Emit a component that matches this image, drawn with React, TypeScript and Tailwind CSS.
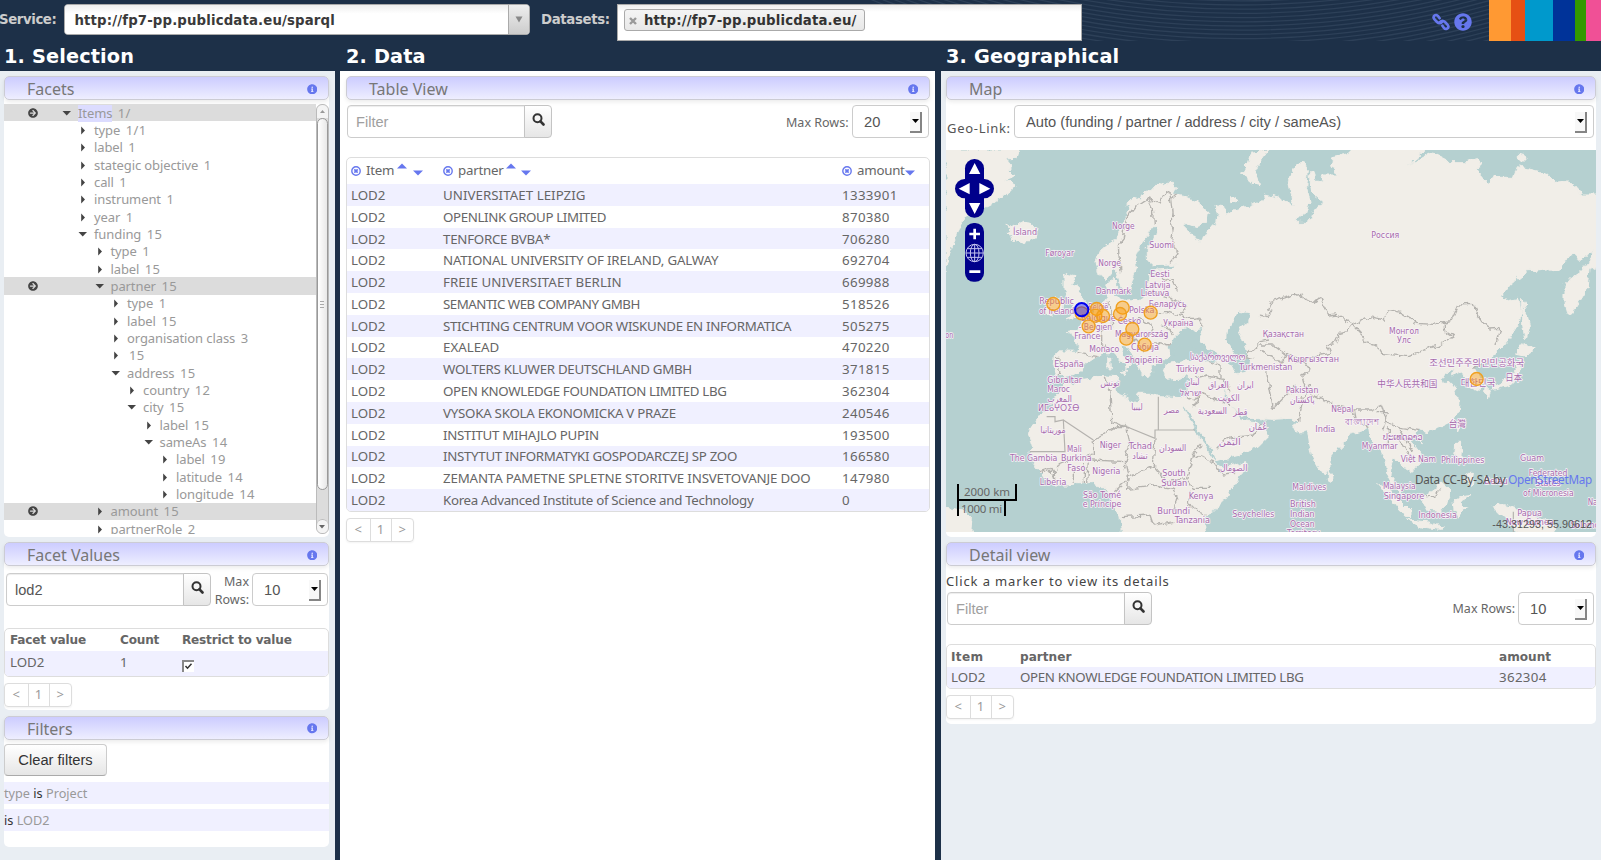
import React from "react";
import { FaArrowCircleRight, FaInfoCircle, FaQuestionCircle } from "react-icons/fa";

const UI = "font-['Noto_Sans','DejaVu_Sans',sans-serif]";
const BOLD = "font-['DejaVu_Sans',sans-serif] font-bold";
const FORM = "font-['Liberation_Sans',Arial,sans-serif]";

function TopBar() {
  return (
    <header className="relative flex h-[41px] bg-[#1d3048]">
      <svg className="absolute left-[800px] top-0" width="689" height="41">
        {Array.from({ length: 42 }, (_, i) => (
          <circle key={i} cx="440" cy="-900" r={800 + i * 4.2} fill="none" stroke="#2d4058" strokeWidth="1.3" />
        ))}
      </svg>
      <div className={"relative flex flex-1 items-start text-[13.3px] " + BOLD}>
        <span className="-ml-px mt-[10px] w-[65px] tracking-[-0.4px] leading-[20px] text-[#ccc]">Service:</span>
        <div className="mt-[4px] flex h-[31px] w-[466px] overflow-hidden rounded border border-[#aaa] bg-white">
          <span className="flex-1 bg-gradient-to-b from-[#eee] from-0% to-white to-30% pl-[9.500px] pt-[6px] leading-[20px] tracking-[0.14px] text-[#3a3a3a]">
            http://fp7-pp.publicdata.eu/sparql
          </span>
          <span className="flex w-[21px] items-center justify-center border-l border-[#aaa] bg-gradient-to-b from-[#eee] to-[#ccc]">
            <svg width="8" height="7"><path d="M0.5 0.5h7L4 6.5z" fill="#888" /></svg>
          </span>
        </div>
        <span className="ml-[11px] mt-[10px] w-[76px] tracking-[-0.35px] leading-[20px] text-[#ccc]">Datasets:</span>
        <div className="mt-[4px] h-[37px] w-[465px] border border-[#aaa] bg-white bg-gradient-to-b from-[#eee] from-0% to-white to-20% p-[4px_6px]">
          <span className="inline-flex h-[22px] items-center gap-[7px] rounded-[3px] border border-[#aaa] bg-gradient-to-b from-[#f4f4f4] to-[#e8e8e8] pl-[4px] pr-[7px] pt-px leading-[20px] tracking-[0.14px] text-[#333]">
            <svg width="8" height="8"><path d="M1 1l6 6M7 1l-6 6" stroke="#999" strokeWidth="2.4" /></svg>
            http://fp7-pp.publicdata.eu/
          </span>
        </div>
      </div>
      <div className="relative mr-[17px] flex items-start gap-[4px] pt-[13px] text-[#6677ee]">
        <svg width="18" height="18" viewBox="0 0 18 18" fill="none" stroke="currentColor" strokeWidth="2.7" strokeLinecap="round">
          <path d="M7.600 5.200 6 3C4.500 1 1.200 2.400 1.600 4.800c0.200 1.200 1.200 2 3.400 4.200 1.700 1.700 3.600 1.500 4.800 0.100" />
          <path d="M10.400 12.800l1.600 2.200c1.500 2 4.800 0.600 4.400-1.800-0.200-1.200-1.200-2-3.400-4.200-1.700-1.700-3.600-1.500-4.800-0.100" />
        </svg>
        <FaQuestionCircle size={18} />
      </div>
      <div className="relative flex w-[112px]">
        <i className="w-[21.500px] bg-[#ff9933]" />
        <i className="w-[14.200px] bg-[#e65014]" />
        <i className="w-[28.300px] bg-[#0099cc]" />
        <i className="w-[22px] bg-[#003399]" />
        <i className="w-[11px] bg-[#339900]" />
        <i className="flex-1 bg-[#f05096]" />
      </div>
    </header>
  );
}

function PanelTitle({ children }: { children: string }) {
  return (
    <div className="flex h-[24px] items-center rounded-[5px] border border-[#ccccd4] bg-gradient-to-b from-[#ccccff] to-[#eeeeff] pl-[22px] pr-[11px] shadow-[0_2px_4px_rgba(0,0,0,0.08)]">
      <span className="flex-1 pt-[2px] text-[16px] leading-[22px] text-[#777]">{children}</span>
      <FaInfoCircle size={10.500} className="mt-[2px] text-[#6677ee]" />
    </div>
  );
}

function Search({ placeholder, value }: { placeholder?: string; value?: string }) {
  return (
    <div className="flex h-[33px] w-[205px]">
      <input
        className={"h-[32.500px] w-[178px] rounded-l-[4px] border border-[#ccc] bg-white pl-[8px] pt-px text-[14.600px] text-[#555] shadow-[inset_0_1px_1px_rgba(0,0,0,0.075)] placeholder:text-[#a0a0a0] " + FORM}
        placeholder={placeholder}
        defaultValue={value}
      />
      <button className="-ml-px flex h-[33px] w-[28px] items-center justify-center rounded-r-[4px] border border-[#c4c4c4] bg-gradient-to-b from-white to-[#e6e6e6] pb-[4px]">
        <svg width="13" height="13" viewBox="0 0 13 13" fill="none" stroke="#333">
          <circle cx="5.500" cy="5.200" r="4" strokeWidth="2" />
          <path d="M8.500 8.300l3 3.200" strokeWidth="2.600" strokeLinecap="round" />
        </svg>
      </button>
    </div>
  );
}

function Select({ children, className }: { children: string; className: string }) {
  return (
    <div className={"flex h-[33px] items-center rounded-[4px] border border-[#ccc] bg-white pl-[11px] pr-[6px] text-[14.700px] text-[#555] " + FORM + " " + className}>
      <span className="flex-1 pt-px">{children}</span>
      <span className="mt-px flex h-[21px] w-[12px] items-center justify-center border-b-2 border-r-2 border-[#858585] bg-[#f8f8f8]">
        <svg width="7" height="4"><path d="M0 0h7L3.500 4z" fill="#000" /></svg>
      </span>
    </div>
  );
}

function Pager() {
  return (
    <div className="flex h-[24px] w-[68px] rounded-[4px] border border-[#ddd] text-center text-[13px] leading-[21px] text-[#999] shadow-[0_1px_2px_rgba(0,0,0,0.05)]">
      <span className="w-[23.500px] border-r border-[#ddd]">&lt;</span>
      <span className="w-[21px] border-r border-[#ddd]">1</span>
      <span className="flex-1">&gt;</span>
    </div>
  );
}

type Node = { t: string; n: string; d: number; open?: boolean; on?: boolean };
const tree: Node[] = [
  { t: "Items", n: "1/", d: 0, open: true, on: true },
  { t: "type", n: "1/1", d: 1 },
  { t: "label", n: "1", d: 1 },
  { t: "stategic objective", n: "1", d: 1 },
  { t: "call", n: "1", d: 1 },
  { t: "instrument", n: "1", d: 1 },
  { t: "year", n: "1", d: 1 },
  { t: "funding", n: "15", d: 1, open: true },
  { t: "type", n: "1", d: 2 },
  { t: "label", n: "15", d: 2 },
  { t: "partner", n: "15", d: 2, open: true, on: true },
  { t: "type", n: "1", d: 3 },
  { t: "label", n: "15", d: 3 },
  { t: "organisation class", n: "3", d: 3 },
  { t: "", n: "15", d: 3 },
  { t: "address", n: "15", d: 3, open: true },
  { t: "country", n: "12", d: 4 },
  { t: "city", n: "15", d: 4, open: true },
  { t: "label", n: "15", d: 5 },
  { t: "sameAs", n: "14", d: 5, open: true },
  { t: "label", n: "19", d: 6 },
  { t: "latitude", n: "14", d: 6 },
  { t: "longitude", n: "14", d: 6 },
  { t: "amount", n: "15", d: 2, on: true },
  { t: "partnerRole", n: "2", d: 2 },
];
const indent = ["pl-[30px]", "pl-[46px]", "pl-[62.500px]", "pl-[79px]", "pl-[95px]", "pl-[111.500px]", "pl-[128px]"];

function FacetTree() {
  return (
    <div className="mt-[4px] flex h-[430px] overflow-hidden">
      <div className="flex-1">
        {tree.map((r, i) => (
          <div key={i} className={"flex h-[17.330px] items-center text-[13px] leading-[17px] text-[#999] " + (r.on ? "bg-[#dcdcdc]" : "")}>
            <span className="flex w-[23px] shrink-0 justify-end text-[#444]">
              {r.on && <FaArrowCircleRight size={10} className="mr-[-11px]" />}
            </span>
            <span className={"ml-[5px] flex items-center pt-px " + indent[r.d]}>
              <span className="flex w-[16px] shrink-0">
                {r.open ? (
                  <svg width="9" height="5"><path d="M0.500 0H9L4.700 4.500z" fill="#444" /></svg>
                ) : (
                  <svg width="9" height="9"><path d="M3.200 0.500v8L7 4.500z" fill="#444" /></svg>
                )}
              </span>
              <span className={"tracking-[-0.1px] " + (r.d === 0 ? "bg-[#dcdcff]" : "")}>{r.t}</span>
              <span className={"tracking-[0.3px] " + (r.t ? "ml-[5.500px]" : "ml-[2px]")}>{r.n}</span>
            </span>
          </div>
        ))}
      </div>
      <div className="flex w-[13.500px] flex-col rounded-[6px] border border-[#bbb] bg-[#dcdcdc]">
        <span className="flex h-[13px] shrink-0 items-center justify-center rounded-t-[6px] bg-[#f4f4f4]">
          <svg width="5" height="3"><path d="M0 3h5L2.500 0z" fill="#999" /></svg>
        </span>
        <span className="flex h-[372px] shrink-0 flex-col items-center justify-center gap-[2px] rounded-[6px] border border-[#999] bg-gradient-to-r from-white to-[#e8e8e8]">
          <i className="h-px w-[4px] bg-[#aaa]" />
          <i className="h-px w-[4px] bg-[#aaa]" />
          <i className="h-px w-[4px] bg-[#aaa]" />
        </span>
        <span className="mt-auto flex h-[14px] items-center justify-center rounded-[6px] border-t border-[#bbb] bg-[#f4f4f4]">
          <svg width="6" height="4"><path d="M0 0h6L3 3.500z" fill="#666" /></svg>
        </span>
      </div>
    </div>
  );
}

function Selection() {
  return (
    <section className="flex w-[335px] flex-col gap-[5.500px] bg-[#e9eef3] pl-[4px] pr-[6px] pt-[5px]">
      <div className="h-[460.500px] rounded-[5px] bg-white">
        <PanelTitle>Facets</PanelTitle>
        <FacetTree />
      </div>
      <div className="h-[168px] rounded-[5px] bg-white">
        <PanelTitle>Facet Values</PanelTitle>
        <div className="flex pl-[2px] pr-[1px] pt-[7px]">
          <Search value="lod2" />
          <span className="w-[39px] pr-px text-right text-[12.500px] leading-[18px] text-[#666]">Max Rows:</span>
          <Select className="ml-[2px] w-[76px]">10</Select>
        </div>
        <div className="mt-[-16px] pt-[35px]">
          <div className="h-[49px] overflow-hidden rounded-[5px] border border-[#ddd] text-[#666]">
            <div className={"flex h-[22px] items-center pl-[5px] text-[12.100px] tracking-[-0.2px] " + BOLD}>
              <span className="w-[110px]">Facet value</span>
              <span className="w-[62px]">Count</span>
              <span className="whitespace-nowrap">Restrict to value</span>
            </div>
            <div className="flex h-[25px] bg-[#f0f0ff] pl-[5px] text-[13.300px] leading-[22px]">
              <span className="w-[110px]">LOD2</span>
              <span className="w-[62px]">1</span>
              <span className="mt-[9px] h-[12px] w-[12px] border-l-2 border-t-2 border-[#888] bg-white">
                <svg width="10" height="10"><path d="M1.500 4l2 2.200L7.500 1.800" fill="none" stroke="#333" strokeWidth="1.500" /></svg>
              </span>
            </div>
          </div>
        </div>
        <div className="pt-[6px]"><Pager /></div>
      </div>
      <div className="h-[131px] rounded-[5px] bg-white">
        <PanelTitle>Filters</PanelTitle>
        <button className={"mt-[4px] flex h-[32px] w-[103px] items-center justify-center rounded-[4px] border border-[#ccc] border-b-[#aaa] bg-gradient-to-b from-white to-[#e6e6e6] pt-px text-[14.700px] text-[#333] " + FORM}>
          Clear filters
        </button>
        <p className="mt-[6px] h-[22px] bg-[#f0f0ff] text-[12.700px] leading-[23px] text-[#999]">type <span className="text-[#333]">is</span> Project</p>
        <p className="mt-[5px] h-[22px] bg-[#f0f0ff] text-[12.700px] leading-[23px] text-[#999]"><span className="text-[#333]">is</span> LOD2</p>
      </div>
    </section>
  );
}

const rows: [string, string, string][] = [
  ["UNIVERSITAET LEIPZIG", "1333901", "tracking-[0.05px]"],
  ["OPENLINK GROUP LIMITED", "870380", "tracking-[-0.37px]"],
  ["TENFORCE BVBA*", "706280", "tracking-[-0.25px]"],
  ["NATIONAL UNIVERSITY OF IRELAND, GALWAY", "692704", "tracking-[-0.17px]"],
  ["FREIE UNIVERSITAET BERLIN", "669988", "tracking-[0.08px]"],
  ["SEMANTIC WEB COMPANY GMBH", "518526", "tracking-[-0.48px]"],
  ["STICHTING CENTRUM VOOR WISKUNDE EN INFORMATICA", "505275", "tracking-[-0.3px]"],
  ["EXALEAD", "470220", "tracking-[0px]"],
  ["WOLTERS KLUWER DEUTSCHLAND GMBH", "371815", "tracking-[-0.3px]"],
  ["OPEN KNOWLEDGE FOUNDATION LIMITED LBG", "362304", "tracking-[-0.34px]"],
  ["VYSOKA SKOLA EKONOMICKA V PRAZE", "240546", "tracking-[-0.25px]"],
  ["INSTITUT MIHAJLO PUPIN", "193500", "tracking-[-0.28px]"],
  ["INSTYTUT INFORMATYKI GOSPODARCZEJ SP ZOO", "166580", "tracking-[-0.3px]"],
  ["ZEMANTA PAMETNE SPLETNE STORITVE INSVETOVANJE DOO", "147980", "tracking-[-0.16px]"],
  ["Korea Advanced Institute of Science and Technology", "0", "tracking-[-0.3px]"],
];

function Remove() {
  return (
    <svg width="10" height="10" viewBox="0 0 10 10" className="mr-[5px]" fill="none" stroke="#6677ee">
      <circle cx="5" cy="5" r="4.200" strokeWidth="1.400" />
      <path d="M3.300 3.300l3.400 3.400M6.700 3.300L3.300 6.700" strokeWidth="1.700" />
    </svg>
  );
}
function Up() {
  return <svg width="10" height="6" className="mb-[10px] ml-[3px]"><path d="M0 5.500h10L5 0.500z" fill="#6677ee" /></svg>;
}
function Down({ className }: { className: string }) {
  return <svg width="10" height="6" className={"mt-[4px] " + className}><path d="M0 0.500h10L5 5.500z" fill="#6677ee" /></svg>;
}

function Data() {
  return (
    <section className="ml-[5px] w-[595px] bg-white pl-[6px] pr-[5px] pt-[5px]">
      <PanelTitle>Table View</PanelTitle>
      <div className="flex items-center pl-px pr-[1px] pt-[5px]">
        <Search placeholder="Filter" />
        <span className="ml-auto pt-[3px] text-[12.500px] text-[#666]">Max Rows:</span>
        <Select className="ml-[3.500px] w-[77px]">20</Select>
      </div>
      <div className="mt-[19px] overflow-hidden rounded-[5px] border border-[#ddd] text-[13.300px] text-[#666]">
        <div className="flex h-[26px] items-center pl-[4px] tracking-[-0.25px]">
          <div className="flex w-[92px] items-center"><Remove />Item<Up /><Down className="ml-[6px]" /></div>
          <div className="flex w-[399px] items-center"><Remove />partner<Up /><Down className="ml-[5px]" /></div>
          <div className="flex items-center"><Remove />amount<Down className="ml-0" /></div>
        </div>
        {rows.map(([p, a, spacing], i) => (
          <div key={p} className={"flex h-[21.800px] items-center whitespace-nowrap pl-[4px] pt-px leading-[21px] " + (i % 2 ? "bg-white" : "bg-[#f0f0ff]")}>
            <span className="w-[92px]">LOD2</span>
            <span className={"w-[399px] " + spacing}>{p}</span>
            <span className="tracking-[0.35px]">{a}</span>
          </div>
        ))}
      </div>
      <div className="pt-[6px]"><Pager /></div>
    </section>
  );
}

const land = [
  "M18 15H235L228 40 200 42 215 60 205 80 225 95 195 105 222 120 215 135 180 160 150 180 110 200 75 220 55 250 45 285 30 320 18 380Z",
  "M198 234L215 245 225 238 240 240 250 232 275 235 292 255 285 275 250 297 225 290 210 280 222 270 200 262 215 255Z",
  "M985 15L935 22 925 55 908 85 920 100 945 122 958 125 955 100 945 80 960 50Z",
  "M372 395L385 388 405 392 392 415 415 430 420 455 432 470 455 490 450 510 400 518 380 524 405 502 392 492 402 475 385 455 372 430Z",
  "M325 470L350 455 368 470 365 500 335 512 315 500Z",
  "M475 385L468 350 478 320 500 300 530 285 545 250 560 215 575 180 555 185 580 160 600 165 605 145 630 140 650 118 665 120 685 112 700 112 710 130 700 150 740 155 775 170 805 205 800 235 770 245 740 235 728 240 750 262 765 285 785 290 790 272 800 270 812 245 830 232 835 205 828 180 855 182 852 215 885 195 935 180 960 172 975 150 1020 160 1062 185 1045 110 1065 60 1095 52 1105 75 1100 125 1110 170 1100 205 1066 222 1075 232 1100 232 1112 222 1118 195 1145 180 1152 205 1140 178 1150 170 1115 140 1108 90 1120 78 1130 105 1152 112 1140 90 1195 90 1175 60 1178 35 1230 25V5H1450V20L1400 65 1440 40 1465 25 1490 30 1530 50 1580 50 1610 38 1625 60 1605 70 1630 100 1648 120 1660 90 1680 100 1720 100 1732 65 1780 75 1820 85 1845 112 1880 108 1910 125 1922 150H1990V360L1950 370 1945 430 1930 450 1905 490 1885 510 1875 470 1875 420 1890 400 1920 380 1945 350 1960 318 1945 320 1920 350 1910 330 1885 335 1860 370 1840 380 1820 372 1760 378 1740 395 1710 420 1688 450 1700 468 1735 460 1742 475 1745 500 1735 540 1710 580 1690 605 1675 620 1645 645 1600 665 1615 690 1630 725 1615 738 1592 728 1582 700 1560 680 1535 690 1540 670 1505 700 1510 715 1535 715 1550 735 1540 750 1560 765 1558 800 1535 830 1500 847 1460 860 1440 855 1430 870 1445 895 1415 867 1405 875 1410 890 1440 925 1442 955 1415 980 1390 965 1380 950 1360 940 1355 955 1350 990 1370 1015 1390 1045 1400 1055 1380 1045 1355 1015 1340 985 1335 945 1325 915 1305 905 1290 875 1285 845 1265 860 1235 865 1220 885 1195 910 1170 930 1170 965 1150 990 1130 960 1115 930 1105 895 1100 860 1080 865 1060 845 1075 835 1050 820 1000 823 930 820 918 805 905 812 870 775 860 745 845 730 860 765 885 795 900 825 920 828 945 830 985 850 980 875 950 905 900 930 830 947 820 920 800 895 780 865 760 825 735 785 728 780 740 810 760 845 780 885 800 910 815 930 830 955 850 968 920 950 920 970 890 1010 850 1065 810 1105 790 1130 795 1175H545L540 1115 520 1085 515 1055 500 1025 470 1025 460 1010 410 1010 390 1020 350 1020 320 1005 300 980 280 955 270 925 275 905 265 865 285 835 300 810 340 780 345 755 370 725 380 715 410 715 430 703 500 693 530 695 522 735 545 750 590 770 600 745 640 745 660 755 725 758 745 745 752 700 740 690 700 705 680 690 670 670 690 655 720 650 760 635 800 650 850 645 840 625 800 605 780 590 795 550 760 555 735 545 720 560 700 580 685 605 690 630 660 655 630 665 640 680 625 697 605 685 590 645 560 605 540 600 545 625 575 655 560 670 530 635 515 610 490 625 470 635 440 655 420 680 380 697 350 690 340 655 345 620 410 622 415 600 410 575 385 565 415 548 430 530 455 512 470 490 500 465 510 440 500 420 520 400 530 410 530 432 520 450 560 465 610 462 622 430 632 390 650 375 690 372 715 355 690 360 640 362 622 345 622 310 650 270 655 245 630 245 625 270 600 300 585 340 590 370 580 400 570 430 550 440 535 405 525 370 500 400Z",
  "M5 1085L70 1095 98 1125 95 1175H5Z",
  "M1313 1013L1340 1028 1380 1065 1410 1095 1410 1120 1385 1105 1355 1065Z",
  "M1398 1125L1460 1130 1510 1145 1500 1153 1440 1145Z",
  "M1442 1060L1480 1035 1505 1012 1530 1035 1520 1075 1500 1100 1460 1095Z",
  "M1542 1065L1560 1055 1590 1052 1560 1068 1580 1090 1565 1092 1560 1120 1545 1100Z",
  "M1547 892L1562 892 1560 930 1575 945 1560 945 1545 925Z",
  "M1580 985L1600 985 1597 1025 1572 1010 1585 1000Z",
  "M1660 1085L1700 1082 1740 1095 1790 1115 1840 1145 1850 1175H1740L1700 1125Z",
  "M1552 825L1560 828 1550 855 1543 845Z",
  "M1165 975L1185 995 1175 1010 1165 1005Z",
  "M1742 640L1738 690 1720 715 1690 725 1655 735 1665 720 1700 705 1725 670Z",
  "M1745 593L1780 615 1755 630 1730 625Z",
  "M1638 730L1652 738 1645 760 1636 750Z",
  "M1748 460L1758 500 1768 540 1755 585 1748 540Z",
  "M503 640H512L514 668 504 672Z",
  "M500 610L510 605 512 628 503 630Z",
  "M540 678L563 672 556 690Z",
  "M705 700L730 693 720 708Z",
  "M1735 25L1755 30 1758 45 1735 45Z",
  "M870 160L885 155 888 172 872 176Z",
];
const water = [
  "M700 612L730 600 760 606 800 618 835 640 790 650 740 645 705 648Z",
  "M862 555L895 500 930 505 925 530 895 545 912 590 925 640 920 680 890 685 870 650 882 620 858 580Z",
];
const borders = [
  "M540 385L535 300 550 280 560 220 590 180 620 160 640 190 643 238",
  "M620 160L660 175 675 140 690 145 695 190 700 250 695 290 715 325 690 355",
  "M688 162L710 150M630 385L700 410 715 440M625 440L690 460 740 480 720 510M650 500L680 500 740 520 770 515 795 550M660 540L690 555 700 570M510 470L515 540 480 560M540 530L600 520 640 545 620 580",
  "M485 560V600L515 610M560 560L590 590 610 625M640 590L690 600M345 640H360L355 690M410 622L470 635",
  "M910 640L960 590 990 585M960 510L985 515 995 500 983 495 993 470 1060 450 1085 445 1090 460 1120 475 1138 458 1168 513 1190 510 1237 540 1285 515 1335 525 1345 497 1380 505 1430 535 1480 538 1535 525 1555 480 1600 478 1625 530 1650 552 1680 550 1665 600",
  "M1237 540L1220 560 1200 565 1190 595 1160 600 1170 625 1100 640 1065 650 1000 600 960 600M1237 540L1270 575 1275 590 1310 600 1325 625 1400 635 1455 612 1500 600 1540 575 1510 555 1510 530",
  "M960 620L990 630 1020 655 1040 625 1085 640 1110 675 1085 690 1095 730 1120 750 1165 775 1240 795 1290 795 1325 780 1340 830 1380 850 1440 860",
  "M1115 720L1090 760 1075 830M980 680L1000 790 1030 760 1070 720M1240 795L1245 820 1285 845M1310 800L1345 800 1330 850M1345 850L1345 905M1365 870L1390 900 1415 940M1375 850L1420 920M1600 670L1650 650",
  "M495 695L510 740 515 830 560 845M460 885L530 845 560 845M460 885V930L400 940 350 960 345 1000M560 845L570 900 555 950 460 945M555 950L565 1000 520 1040M645 880L640 960 565 1000M640 960L680 1010 740 1000 760 930 780 900M760 930L820 950 850 990 890 985M740 1000L760 1030 810 1030M565 1000L560 1030 640 1020 700 1030 710 1060 700 1100M545 1115L630 1110 640 1140 700 1130M750 1040L745 1080 800 1110M400 960V1010M430 960V1010M445 950L440 1010M300 980L330 970 350 1000",
  "M735 755L760 770 790 745 840 770 870 780M765 700L800 690 850 700 870 740M800 645L840 660 840 700M830 910L860 880 940 870 970 830M890 630L940 640M760 780L775 770V750",
  "M1505 1030L1480 1055 1455 1055",
];
const straightBorders = "M560 845L645 880V855H765M655 855V755M370 825L460 885M320 815H345V830L370 825 375 920H270M1720 1100V1161";
type Label = [string, number, number, number];
const labels: Label[] = [
  ["Ísland", 255, 271, 72], ["Føroyar", 359, 333, 86], ["Norge", 550, 252, 68], ["Norge", 509, 363, 68],
  ["Suomi", 665, 308, 74], ["Eesti", 660, 395, 58], ["Latvija", 653, 428, 76], ["Lietuva", 645, 453, 86],
  ["Danmark", 520, 448, 106], ["Беларусь", 683, 485, 114], ["Polska", 605, 503, 76], ["Česko", 568, 538, 70],
  ["Україна", 715, 543, 90], ["Republic", 350, 478, 104], ["of Ireland", 350, 506, 106], ["België", 475, 495, 60],
  ["Belgique", 475, 527, 104], ["- Belgien", 466, 556, 100], ["France", 442, 583, 78], ["Magyarország", 605, 575, 160],
  ["Monaco", 493, 621, 90], ["Србија", 615, 615, 84], ["Shqipëria", 611, 655, 114], ["España", 387, 667, 88],
  ["Türkiye", 750, 680, 84], ["საქართველო", 833, 645, 166], ["Gibraltar", 374, 714, 104], ["Maroc", 356, 740, 68],
  ["المغرب", 359, 770, 74], ["ⵍⵎⴰⵖⵔⵉⴱ", 356, 799, 124], ["تونس", 510, 722, 58], ["ليبيا", 591, 796, 34],
  ["مصر", 695, 805, 46], ["لبنان", 757, 720, 44], ["ישראל", 752, 752, 66], ["العراق", 835, 728, 62],
  ["ایران", 916, 730, 50], ["الكويت", 866, 769, 66], ["السعودية", 817, 807, 88], ["قطر", 901, 811, 42],
  ["عُمان", 954, 855, 56], ["اليَمَن", 869, 900, 66], ["الصومال", 881, 977, 82], ["موريتانيا", 339, 863, 76],
  ["Mali", 403, 920, 44], ["Niger", 511, 908, 64], ["Tchad", 601, 913, 70], ["تشاد", 600, 943, 46],
  ["السودان", 698, 917, 82], ["The Gambia", 281, 948, 142], ["Burkina", 409, 947, 92], ["Faso", 409, 977, 54],
  ["Nigeria", 499, 986, 84], ["South", 702, 992, 70], ["Sudan", 703, 1022, 78], ["Liberia", 339, 1021, 80],
  ["São Tomé", 486, 1058, 114], ["e Príncipe", 486, 1086, 116], ["Kenya", 783, 1062, 74], ["Burundi", 701, 1106, 98],
  ["Tanzania", 757, 1135, 106], ["Seychelles", 940, 1117, 126], ["Россия", 1336, 279, 84], ["Қазақстан", 1030, 575, 124],
  ["Монгол", 1392, 566, 90], ["Улс", 1392, 595, 42], ["Кыргызстан", 1120, 650, 154], ["Turkmenistan", 977, 675, 160],
  ["Pakistan", 1086, 744, 98], ["پاکستان", 1087, 775, 74], ["中华人民共和国", 1402, 727, 180],
  ["조선민주주의인민공화국", 1610, 664, 284], ["대한민국", 1614, 722, 104], ["日本", 1721, 709, 50], ["台灣", 1552, 845, 52],
  ["Nepal", 1207, 802, 66], ["বাংলাদেশ", 1266, 841, 100], ["India", 1156, 861, 60], ["ປະເທດລາວ", 1388, 884, 120],
  ["Myanmar", 1319, 913, 108], ["Việt Nam", 1435, 950, 106], ["Philippines", 1568, 955, 130], ["Guam", 1776, 947, 72],
  ["Maldives", 1108, 1035, 102], ["Malaysia", 1378, 1032, 98], ["Singapore", 1392, 1062, 122], ["Belau", 1668, 1018, 70],
  ["Federated", 1824, 992, 116], ["States", 1824, 1022, 76], ["of Micronesia", 1825, 1052, 152], ["British", 1089, 1087, 78],
  ["Indian", 1087, 1116, 74], ["Ocean", 1087, 1146, 74], ["Territory", 1090, 1174, 100], ["Indonesia", 1493, 1118, 116],
  ["Papua", 1769, 1112, 74], ["New Guinea", 1769, 1141, 144], ["Solomon", 1942, 1150, 100], ["Nauru", 1976, 1079, 66],
  ["on", 28, 580, 24],
];
const markers = [
  [340, 477], [425, 505], [470, 492], [466, 512], [489, 513], [446, 544], [548, 488], [540, 507],
  [632, 503], [577, 552], [559, 581], [614, 599], [1610, 702],
];

function WorldMap() {
  return (
    <div className="relative h-[382px] w-[650px] overflow-hidden bg-[#b5d0d0]">
      <svg width="650" height="382" viewBox="18 15 1950 1146" className="block">
        <filter id="coast" x="0" y="0" width="2000" height="1180" filterUnits="userSpaceOnUse">
          <feTurbulence type="fractalNoise" baseFrequency="0.045" numOctaves="3" seed="4" result="n" />
          <feDisplacementMap in="SourceGraphic" in2="n" scale="22" xChannelSelector="R" yChannelSelector="G" />
        </filter>
        <g filter="url(#coast)">
          <g fill="#f1eee8" stroke="#f1eee8" strokeWidth="3" strokeLinejoin="round">{land.map((d) => <path key={d} d={d} />)}</g>
          <g fill="#b5d0d0">{water.map((d) => <path key={d} d={d} />)}</g>
          <g fill="none" stroke="#b4b2ae" strokeWidth="4" strokeLinejoin="round">{borders.map((d) => <path key={d} d={d} />)}</g>
        </g>
        <path d={straightBorders} fill="none" stroke="#b4b2ae" strokeWidth="3.500" />
        <g fill="#a66bab" stroke="#f8f3f8" strokeWidth="5" strokeLinejoin="round" paintOrder="stroke" fontSize="27" textAnchor="middle" fontFamily="'DejaVu Sans','Noto Sans CJK SC','Noto Sans CJK KR',sans-serif">
          {labels.map(([t, x, y, w], i) => (
            <text key={i} x={x} y={y} textLength={w} lengthAdjust="spacingAndGlyphs">{t}</text>
          ))}
        </g>
        <g fill="#ff9900" fillOpacity="0.4" stroke="#f0a020" strokeWidth="4">
          {markers.map(([x, y]) => <circle key={x} cx={x} cy={y} r="19.500" />)}
        </g>
        <circle cx="425" cy="494" r="20" fill="#0000ff" fillOpacity="0.400" stroke="#0000ee" strokeWidth="6" />
        <g fill="#00008b">
          <rect x="75" y="42" width="57" height="176" rx="28" />
          <rect x="45" y="102" width="117" height="58" rx="29" />
          <rect x="75" y="234" width="57" height="176" rx="26" />
        </g>
        <g fill="#fff">
          <path d="M104 54L121 87H87ZM104 207L121 174H87ZM56 131L89 114V148ZM151 131L118 114V148Z" />
          <path d="M100 251h8v12h12v8h-12v12h-8v-12h-12v-8h12zM88 376h33v8H88z" />
        </g>
        <g fill="none" stroke="#c4c4f0" strokeWidth="3">
          <circle cx="104" cy="324" r="26" />
          <ellipse cx="104" cy="324" rx="13" ry="26" />
          <path d="M78 324h52M104 298v52M82 311h44M82 337h44" />
        </g>
      </svg>
      <div className="absolute left-[11px] top-[334px] text-[11.500px] leading-[15px] text-[#666]">
        <div className="h-[17px] w-[60px] border-2 border-t-0 border-black text-center">2000 km</div>
        <div className="-mt-[2px] h-[17px] w-[49px] whitespace-nowrap border-2 border-b-0 border-black pl-[2px] tracking-[-0.3px]">1000 mi</div>
      </div>
      <div className="absolute bottom-[44px] right-[4px] text-[11.700px] leading-[18px] tracking-[-0.25px] text-[#555]">
        Data CC-By-SA by <span className="text-[#6677ee]">OpenStreetMap</span>
      </div>
      <div className={"absolute bottom-0 right-[4px] text-[10.800px] leading-[15px] text-[#555] " + FORM}>-43.31293, 55.90612</div>
    </div>
  );
}

function Geographical() {
  return (
    <section className="ml-[6px] flex-1 bg-[#e9eef3] pl-[5px] pr-[5px] pt-[5px]">
      <div className="h-[461px] rounded-[5px] bg-white">
        <PanelTitle>Map</PanelTitle>
        <div className="flex items-center pb-[12px] pl-px pr-[2px] pt-[5px]">
          <span className="w-[67px] whitespace-nowrap pt-[13px] text-[13px] leading-[18px] tracking-[0.700px] text-[#555]">Geo-Link:</span>
          <Select className="flex-1">Auto (funding / partner / address / city / sameAs)</Select>
        </div>
        <WorldMap />
      </div>
      <div className="mt-[5px] h-[182px] rounded-[5px] bg-white">
        <PanelTitle>Detail view</PanelTitle>
        <p className="pb-px pt-[5px] text-[13px] leading-[20px] tracking-[0.860px] text-[#444]">Click a marker to view its details</p>
        <div className="flex items-center pl-[1px] pr-[2px]">
          <Search placeholder="Filter" />
          <span className="ml-auto pt-[2px] text-[12.500px] text-[#666]">Max Rows:</span>
          <Select className="ml-[3px] w-[76px]">10</Select>
        </div>
        <div className="mt-[19px] h-[45px] overflow-hidden rounded-[5px] border border-[#ddd] text-[#666]">
          <div className={"flex h-[21.500px] items-center pl-[4px] pt-[2px] text-[12.100px] " + BOLD}>
            <span className="w-[69px] tracking-[0.300px]">Item</span><span className="w-[479px]">partner</span><span>amount</span>
          </div>
          <div className="flex h-[22px] items-center bg-[#f0f0ff] pl-[4px] text-[13.300px] leading-[21px]">
            <span className="w-[69px]">LOD2</span><span className="w-[479px] tracking-[-0.34px]">OPEN KNOWLEDGE FOUNDATION LIMITED LBG</span><span className="tracking-[0.35px]">362304</span>
          </div>
        </div>
        <div className="pt-[6px]"><Pager /></div>
      </div>
    </section>
  );
}

export default function App() {
  return (
    <div className={"flex h-[860px] w-[1601px] flex-col overflow-hidden bg-[#1d3048] " + UI}>
      <TopBar />
      <div className={"flex h-[30px] text-[19.300px] leading-[31px] tracking-[0.150px] text-white " + BOLD}>
        <h2 className="w-[341px] pl-[4px]">1. Selection</h2>
        <h2 className="w-[600px] pl-[5px]">2. Data</h2>
        <h2 className="pl-[5px]">3. Geographical</h2>
      </div>
      <main className="flex flex-1">
        <Selection />
        <Data />
        <Geographical />
      </main>
    </div>
  );
}
